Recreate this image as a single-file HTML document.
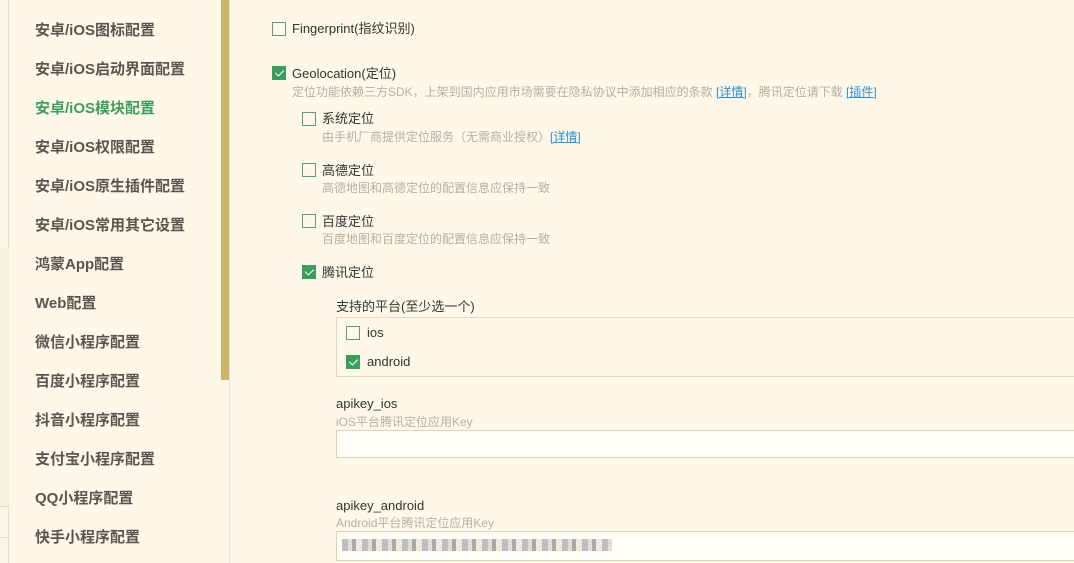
<!DOCTYPE html>
<html><head><meta charset="utf-8"><style>
*{margin:0;padding:0;box-sizing:border-box}
body{width:1074px;height:563px;overflow:hidden;background:#fdf8e8;font-family:"Liberation Sans","Noto Sans CJK SC",sans-serif;position:relative;color:#333}
.ab{position:absolute;white-space:nowrap}
.strip{position:absolute;left:0;top:0;width:9px;height:563px;background:#fbf6e6;border-right:1px solid #ebe3c8}
.strip2{position:absolute;left:0;top:248px;width:9px;height:260px;background:#f6f0dd}
.panel{position:absolute;left:9px;top:0;width:221px;height:563px;border-right:1px solid #ece4ca}
.sb{position:absolute;left:221px;top:0;width:8px;height:380px;background:#cdb46b}
.m{position:absolute;left:35px;font-size:15px;font-weight:bold;color:#5a5550;line-height:20px}
.m.a{color:#3f9e5e}
.cb{position:absolute;width:14px;height:14px;border:1px solid #5e9c6c;background:#fdf8e8}
.cb.c{background:#3d9e5c;border-color:#3d9e5c}
.cb.c::after{content:"";position:absolute;left:4px;top:1px;width:4px;height:7px;border:solid #fff;border-width:0 1.5px 1.5px 0;transform:rotate(45deg)}
.t{font-size:13px;color:#333;line-height:16px}
.h{font-size:12px;color:#b5b0a4;line-height:14px}
.h a{color:#2f8fd0;text-decoration:underline}
.box{position:absolute;left:336px;border:1px solid #e2d9b8;width:740px}
.inp{position:absolute;left:336px;width:740px;height:28px;border:1px solid #ddd4b4;background:#fffdf6}
</style></head><body>
<div class="strip"></div><div class="strip2"></div>
<div style="position:absolute;left:0;top:506px;width:9px;border-top:1px solid #e4dcc0"></div>
<div style="position:absolute;left:0;top:537px;width:9px;border-top:1px solid #e4dcc0"></div>
<div class="panel"></div>
<div class="sb"></div>
<div class="m ab" style="top:21px">安卓/iOS图标配置</div>
<div class="m ab" style="top:60px">安卓/iOS启动界面配置</div>
<div class="m ab a" style="top:99px">安卓/iOS模块配置</div>
<div class="m ab" style="top:138px">安卓/iOS权限配置</div>
<div class="m ab" style="top:177px">安卓/iOS原生插件配置</div>
<div class="m ab" style="top:216px">安卓/iOS常用其它设置</div>
<div class="m ab" style="top:255px">鸿蒙App配置</div>
<div class="m ab" style="top:294px">Web配置</div>
<div class="m ab" style="top:333px">微信小程序配置</div>
<div class="m ab" style="top:372px">百度小程序配置</div>
<div class="m ab" style="top:411px">抖音小程序配置</div>
<div class="m ab" style="top:450px">支付宝小程序配置</div>
<div class="m ab" style="top:489px">QQ小程序配置</div>
<div class="m ab" style="top:528px">快手小程序配置</div>

<div class="cb" style="left:272px;top:22px"></div>
<div class="ab t" style="left:292px;top:21px">Fingerprint(指纹识别)</div>

<div class="cb c" style="left:272px;top:66px"></div>
<div class="ab t" style="left:292px;top:66px">Geolocation(定位)</div>
<div class="ab h" style="left:292px;top:85px">定位功能依赖三方SDK，上架到国内应用市场需要在隐私协议中添加相应的条款 <a>[详情]</a>，腾讯定位请下载 <a>[插件]</a></div>

<div class="cb" style="left:302px;top:112px"></div>
<div class="ab t" style="left:322px;top:111px">系统定位</div>
<div class="ab h" style="left:322px;top:130px">由手机厂商提供定位服务（无需商业授权）<a>[详情]</a></div>

<div class="cb" style="left:302px;top:163px"></div>
<div class="ab t" style="left:322px;top:163px">高德定位</div>
<div class="ab h" style="left:322px;top:181px">高德地图和高德定位的配置信息应保持一致</div>

<div class="cb" style="left:302px;top:214px"></div>
<div class="ab t" style="left:322px;top:214px">百度定位</div>
<div class="ab h" style="left:322px;top:232px">百度地图和百度定位的配置信息应保持一致</div>

<div class="cb c" style="left:302px;top:265px"></div>
<div class="ab t" style="left:322px;top:265px">腾讯定位</div>

<div class="ab t" style="left:336px;top:299px">支持的平台(至少选一个)</div>
<div class="box" style="top:317px;height:60px"></div>
<div class="cb" style="left:346px;top:326px"></div>
<div class="ab t" style="left:367px;top:325px">ios</div>
<div class="cb c" style="left:346px;top:355px"></div>
<div class="ab t" style="left:367px;top:354px">android</div>

<div class="ab t" style="left:336px;top:396px">apikey_ios</div>
<div class="ab h" style="left:336px;top:415px">iOS平台腾讯定位应用Key</div>
<div class="inp" style="top:430px"></div>

<div class="ab t" style="left:336px;top:498px">apikey_android</div>
<div class="ab h" style="left:336px;top:516px">Android平台腾讯定位应用Key</div>
<div class="inp" style="top:531px;height:30px"></div>
<div class="ab" style="left:342px;top:539px;width:270px;height:12px;background:repeating-linear-gradient(90deg,#a9a9b0 0 6px,#d8d6cc 6px 10px,#8c8c92 10px 14px,#e7e3d6 14px 20px);opacity:.75"></div>
</body></html>
